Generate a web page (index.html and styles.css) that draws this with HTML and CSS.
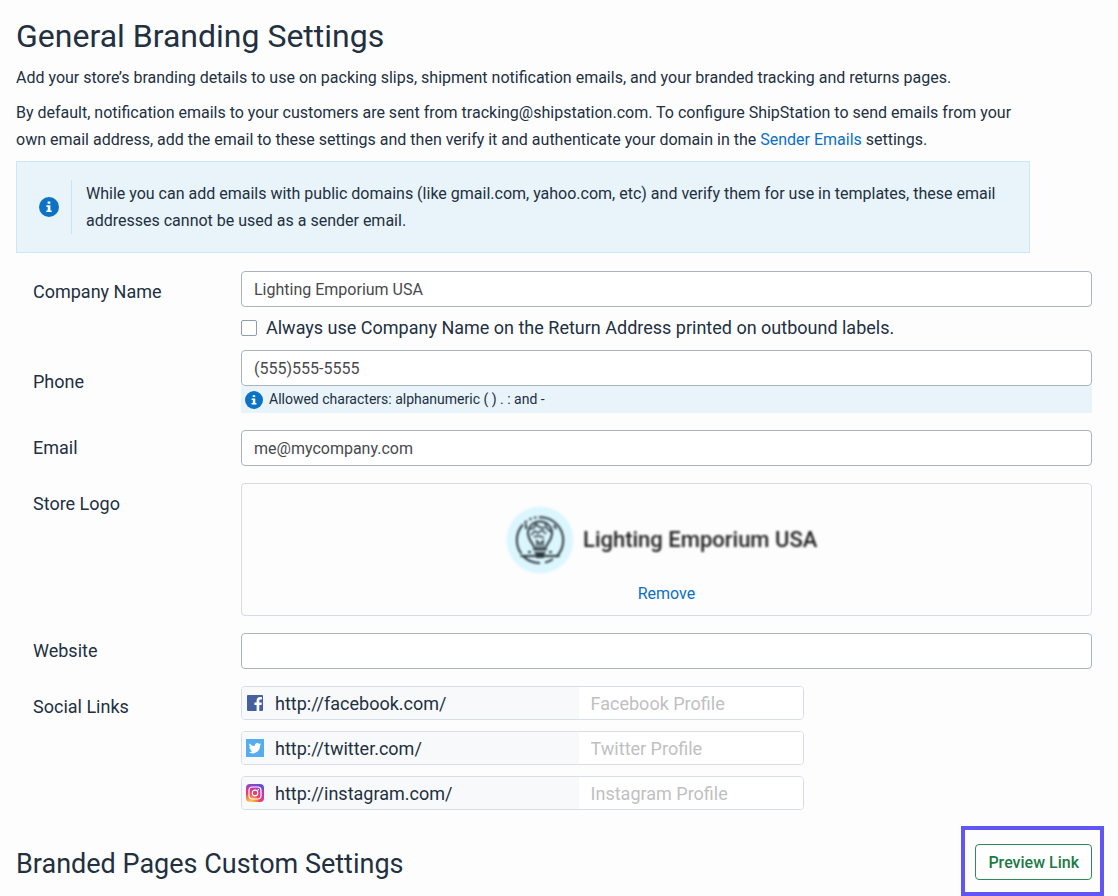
FILE: index.html
```
<!DOCTYPE html>
<html lang="en">
  <head>
    <meta charset="UTF-8" />
    <meta name="viewport" content="width=device-width, initial-scale=1.0" />
    <title>General Branding Settings</title>
    <link rel="stylesheet" href="styles.css">
  </head>
  <body>
    <main class="page">
      <header class="intro">
        <h1>General Branding Settings</h1>
        <p>Add your store’s branding details to use on packing slips, shipment notification emails, and your branded tracking and returns pages.</p>
        <p>By default, notification emails to your customers are sent from tracking@shipstation.com. To configure ShipStation to send emails from your own email address, add the email to these settings and then verify it and authenticate your domain in the <a href="#">Sender Emails</a> settings.</p>
        <div class="notice">
          <svg class="info-icon" viewBox="0 0 20 20" aria-hidden="true">
            <circle cx="10" cy="10" r="10" fill="#0b72c4" />
            <path d="M8.6 4.6h2.7v2.2H8.6zM7.4 8.2h4v5.2h1.3v1.7H7.3v-1.7h1.4V9.9H7.4z" fill="#fff" />
          </svg>
          <div class="notice-text">While you can add emails with public domains (like gmail.com, yahoo.com, etc) and verify them for use in templates, these email addresses cannot be used as a sender email.</div>
        </div>
      </header>

      <form class="settings">
        <div class="row row-company">
          <label class="label" for="company">Company Name</label>
          <div class="field">
            <input class="input" type="text" id="company" value="Lighting Emporium USA" />
            <div class="check">
              <input type="checkbox" id="always" />
              <label for="always">Always use Company Name on the Return Address printed on outbound labels.</label>
            </div>
          </div>
        </div>

        <div class="row row-center">
          <label class="label" for="phone">Phone</label>
          <div class="field">
            <input class="input" type="text" id="phone" value="(555)555-5555" />
            <div class="hint">
              <svg class="info-icon small" viewBox="0 0 20 20" aria-hidden="true">
                <circle cx="10" cy="10" r="10" fill="#0b72c4" />
                <path d="M8.6 4.6h2.7v2.2H8.6zM7.4 8.2h4v5.2h1.3v1.7H7.3v-1.7h1.4V9.9H7.4z" fill="#fff" />
              </svg>
              <span>Allowed characters: alphanumeric ( ) . : and -</span>
            </div>
          </div>
        </div>

        <div class="row row-center">
          <label class="label" for="email">Email</label>
          <div class="field">
            <input class="input" type="text" id="email" value="me@mycompany.com" />
          </div>
        </div>

        <div class="row">
          <div class="label">Store Logo</div>
          <div class="field logo-box">
            <svg class="logo" viewBox="0 0 322 68" role="img" aria-label="Lighting Emporium USA">
              <circle cx="34" cy="34" r="33.5" fill="#dcf6fe" />
              <g fill="none" stroke="#2c393e" stroke-width="2">
                <path d="M33 11.3a23 23 0 0 1 17 39.7M47 53a23 23 0 0 1-8 3.6M34 57a23 23 0 0 1-17-7M15.5 48a23 23 0 0 1 1.5-29.5M18.5 17l2.5-2M23.5 13.5l2-1M28 11.8l2.5-.4" />
                <path d="M28.5 43c0-5-6.5-8-6.5-16a12 11.5 0 0 1 24 0c0 8-6.5 11-6.5 16z" />
                <path d="M24 23c3 0 5-2 6-5 2 3 6 4 9 4M39 18c1 4 4 7 7 8M25 29l4-4 3 2 4-3 4 4M28 31c4-2 7-1 10 1" stroke-width="1.5" />
                <path d="M31 34v9M37 34v9M30 34l4 4 4-4M34 38v5" stroke-width="1.5" />
                <path d="M14.5 50h39M20 18v5M48 19l2 4" />
              </g>
              <path d="M27.5 42.5h13v2h-13zM28.5 46h11v2h-11zM30 48h8v4h-8zM22 45h3v2h-3zM43 45h3v2h-3z" fill="#2c393e" />
              <text class="logo-name" x="77" y="41">Lighting Emporium USA</text>
            </svg>
            <button type="button" class="remove">Remove</button>
          </div>
        </div>

        <div class="row row-center">
          <label class="label" for="website">Website</label>
          <div class="field">
            <input class="input" type="text" id="website" />
          </div>
        </div>

        <div class="row">
          <div class="label">Social Links</div>
          <div class="field social-list">
            <div class="social">
              <label class="prefix" for="facebook">
                <svg class="social-icon" viewBox="0 0 18 18" aria-hidden="true">
                  <rect x="1" y="1" width="16" height="16" rx="1" fill="#4460a0" />
                  <path d="M10.6 17v-6H8.4V8.4h2.2V6.7c0-2.3 1.4-3.6 3.5-3.6.9 0 1.6.1 1.8.1v2.2h-1.2c-1.1 0-1.4.6-1.4 1.4v1.6h2.5l-.3 2.6h-2.2v6z" fill="#fff" />
                </svg>
                http://facebook.com/
              </label>
              <input type="text" id="facebook" placeholder="Facebook Profile" />
            </div>
            <div class="social">
              <label class="prefix" for="twitter">
                <svg class="social-icon" viewBox="0 0 18 18" aria-hidden="true">
                  <rect width="18" height="18" fill="#55acee" />
                  <path d="M15.2 5.3a5 5 0 0 1-1.5.4 2.6 2.6 0 0 0 1.1-1.4 5 5 0 0 1-1.6.6 2.55 2.55 0 0 0-4.4 2.3 7.2 7.2 0 0 1-5.2-2.6 2.55 2.55 0 0 0 .8 3.4 2.5 2.5 0 0 1-1.2-.3c0 1.2.9 2.3 2.1 2.5a2.6 2.6 0 0 1-1.2.1c.3 1 1.3 1.7 2.4 1.7a5.1 5.1 0 0 1-3.8 1.1 7.2 7.2 0 0 0 11.2-6.4c.5-.4.9-.8 1.3-1.4z" fill="#fff" />
                </svg>
                http://twitter.com/
              </label>
              <input type="text" id="twitter" placeholder="Twitter Profile" />
            </div>
            <div class="social">
              <label class="prefix" for="instagram">
                <svg class="social-icon" viewBox="0 0 18 18" aria-hidden="true">
                  <defs>
                    <radialGradient id="insta" cx="0.25" cy="1.05" r="1.1">
                      <stop offset="0" stop-color="#ffd95e" />
                      <stop offset="0.25" stop-color="#fb9a4a" />
                      <stop offset="0.5" stop-color="#ee3f63" />
                      <stop offset="0.75" stop-color="#c837ab" />
                      <stop offset="1" stop-color="#6250d8" />
                    </radialGradient>
                  </defs>
                  <rect width="18" height="18" rx="4" fill="url(#insta)" />
                  <g fill="none" stroke="#fff" stroke-width="1.2">
                    <rect x="3" y="3" width="12" height="12" rx="3.5" />
                    <circle cx="9" cy="9" r="2.8" />
                  </g>
                  <circle cx="12.3" cy="5.7" r="0.8" fill="#fff" />
                </svg>
                http://instagram.com/
              </label>
              <input type="text" id="instagram" placeholder="Instagram Profile" />
            </div>
          </div>
        </div>
      </form>

      <section class="branded">
        <h2>Branded Pages Custom Settings</h2>
        <div class="preview">
          <button type="button" class="preview-btn">Preview Link</button>
        </div>
      </section>
    </main>
  </body>
</html>
```

FILE: styles.css
```
* {
  box-sizing: border-box;
}
body {
  margin: 0;
  background-color: #fdfdfe;
  color: #22303f;
  font-family: Roboto, "Liberation Sans", sans-serif;
  font-size: 16px;
}
input,
button {
  font-family: inherit;
}
a {
  color: #0b6fc7;
  text-decoration: none;
}
.page {
  padding: 16px 26px 0 16px;
}
h1,
h2 {
  margin: 0;
  font-weight: 400;
}
h1 {
  font-size: 32px;
  line-height: 40px;
}
h2 {
  padding-top: 4px;
  font-size: 27px;
  line-height: 36px;
}
.intro {
  max-width: 1014px;
}
.intro p {
  margin: 8px 0;
  line-height: 27px;
}
.notice {
  display: flex;
  align-items: center;
  gap: 12px;
  padding: 18px 22px;
  background-color: #e8f3fa;
  border: 1px solid #cbe8f8;
}
.info-icon {
  flex: none;
  width: 20px;
  height: 20px;
}
.info-icon.small {
  width: 18px;
  height: 18px;
}
.notice-text {
  padding-left: 14px;
  border-left: 1px solid #cbe3f3;
  line-height: 27px;
}

/* form rows */
.settings {
  margin-top: 18px;
}
.row {
  display: grid;
  grid-template-columns: 208px 1fr;
  align-items: start;
  margin-bottom: 17px;
  padding-left: 17px;
}
.row-company {
  margin-bottom: 10px;
}
.label {
  padding-top: 9px;
  font-size: 18px;
  line-height: 24px;
}
.row-center {
  align-items: center;
}
.row-center .label {
  padding-top: 0;
}
.input {
  display: block;
  width: 100%;
  height: 36px;
  padding: 0 12px;
  background-color: #fff;
  border: 1px solid #a9b4c0;
  border-radius: 4px;
  color: #48494c;
  font-size: 16px;
}
.check {
  display: flex;
  align-items: center;
  gap: 9px;
  margin-top: 9px;
  font-size: 18px;
  line-height: 24px;
}
.check input {
  appearance: none;
  width: 16px;
  height: 16px;
  margin: 0;
  background-color: #fff;
  border: 1px solid #8f9cab;
  border-radius: 2px;
}
.check input:checked {
  background-color: #0b72c4;
}
.hint {
  display: flex;
  align-items: center;
  gap: 6px;
  padding: 4px;
  background-color: #e8f3fa;
  font-size: 14px;
  line-height: 19px;
}
.logo-box {
  display: flex;
  flex-direction: column;
  align-items: center;
  gap: 8px;
  padding: 22px 0 9px;
  border: 1px solid #d5dbe2;
  border-radius: 4px;
}
.logo {
  width: 322px;
  height: 68px;
  filter: blur(1px);
}
.logo-name {
  fill: #222;
  font-size: 22px;
  font-weight: 500;
}
.remove {
  padding: 0;
  background: none;
  border: 0;
  color: #0b6fc7;
  font-size: 16px;
  line-height: 24px;
  cursor: pointer;
}

/* social links */
.social-list {
  display: grid;
  gap: 11px;
  max-width: 563px;
}
.social {
  display: grid;
  grid-template-columns: 3fr 2fr;
  height: 34px;
  overflow: hidden;
  border: 1px solid #d8dee6;
  border-radius: 4px;
}
.prefix {
  display: flex;
  align-items: center;
  gap: 11px;
  padding-left: 4px;
  background-color: #f8f9fb;
  font-size: 18px;
}
.social-icon {
  width: 18px;
  height: 18px;
}
.social input {
  min-width: 0;
  padding: 0 12px;
  background-color: #fff;
  border: 0;
  font-size: 18px;
}
.social input::placeholder {
  color: #bfc0c2;
}

.branded {
  display: flex;
  align-items: center;
  justify-content: space-between;
  padding: 15px 0 14px;
}
.preview {
  position: relative;
}
/* highlight frame around the button */
.preview::after {
  content: "";
  position: absolute;
  top: -18px;
  right: -12px;
  bottom: -16px;
  left: -14px;
  border: 4px solid #6155f5;
  pointer-events: none;
}
.preview-btn {
  height: 36px;
  padding: 0 12px;
  background-color: #fff;
  border: 1px solid #2f8a57;
  border-radius: 4px;
  color: #1c7a45;
  font-size: 16px;
  font-weight: 500;
  cursor: pointer;
}
```
